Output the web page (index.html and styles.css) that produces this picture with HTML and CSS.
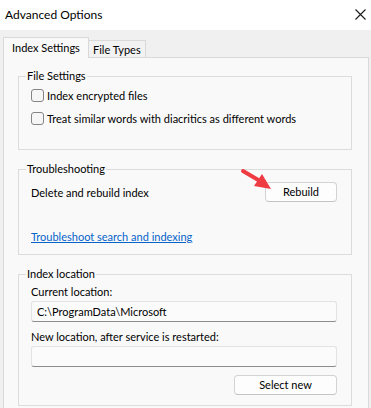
FILE: index.html
```html
<!DOCTYPE html>
<html>
<head>
<meta charset="utf-8">
<link rel="stylesheet" href="styles.css">
</head>
<body>
<div class="window">
  <div class="titlebar">
    <span class="title">Advanced Options</span>
    <svg class="close" width="11" height="11" viewBox="0 0 11 11"><path d="M0.5 0.5 L10.5 10.5 M10.5 0.5 L0.5 10.5" stroke="#1a1a1a" stroke-width="1.1" fill="none"/></svg>
  </div>
  <div class="client">
    <div class="tabs">
      <div class="tab active">Index Settings</div>
      <div class="tab">File Types</div>
    </div>
    <div class="panel">
      <fieldset class="group group-file">
        <legend>File Settings</legend>
        <div class="group-body">
          <label class="check"><span class="box"></span>Index encrypted files</label>
          <label class="check"><span class="box"></span>Treat similar words with diacritics as different words</label>
        </div>
      </fieldset>
      <fieldset class="group group-trouble">
        <legend>Troubleshooting</legend>
        <div class="group-body">
          <div class="row">
            <span>Delete and rebuild index</span>
            <button class="btn">Rebuild</button>
          </div>
          <a class="link" href="#">Troubleshoot search and indexing</a>
        </div>
      </fieldset>
      <fieldset class="group group-loc">
        <legend>Index location</legend>
        <div class="group-body">
          <div class="label">Current location:</div>
          <div class="field">C:\ProgramData\Microsoft</div>
          <div class="label label2">New location, after service is restarted:</div>
          <div class="field"></div>
          <div class="btn-row"><button class="btn btn-wide">Select new</button></div>
        </div>
      </fieldset>
    </div>
  </div>
  <svg class="arrow" width="40" height="30" viewBox="0 0 40 30">
    <line x1="3" y1="3" x2="20" y2="13" stroke="#ef3b42" stroke-width="4" stroke-linecap="round"/>
    <polygon points="31,21 14,18 22,6" fill="#ef3b42"/>
  </svg>
</div>
</body>
</html>
```

FILE: styles.css
```css
* { box-sizing: border-box; }
html, body { margin: 0; padding: 0; }
body {
  width: 371px;
  height: 408px;
  overflow: hidden;
  background: #f0f0f0;
  font-family: "Lato", "Liberation Sans", sans-serif;
  font-size: 11px;
  color: #000;
}
.window { position: relative; width: 371px; height: 408px; overflow: hidden; }
.titlebar {
  height: 30px;
  background: #fff;
  display: flex;
  align-items: center;
  justify-content: space-between;
  padding: 0 5px 0 5px;
}
.title { font-size: 12px; line-height: 16px; }
.close { margin-top: -1px; }
.client { padding: 7px 2px 0 3px; }
.tabs { display: flex; align-items: flex-end; height: 20px; }
.tab {
  border: 1px solid #d9d9d9;
  border-bottom: none;
  line-height: 16px;
  white-space: nowrap;
}
.tab.active {
  position: relative;
  z-index: 1;
  height: 21px;
  margin-bottom: -1px;
  width: 86px;
  padding: 2px 0 0 8px;
  background: #f9f9f9;
}
.tab:not(.active) {
  height: 17px;
  width: 57px;
  padding: 1px 0 0 4px;
  background: #f2f2f2;
  border-left: none;
}
.panel {
  border: 1px solid #d9d9d9;
  border-bottom: none;
  background: #f9f9f9;
  height: 351px;
  padding: 10px 16px 0 14px;
}
.group {
  margin: 0;
  border: 1px solid #dcdcdc;
  padding: 0 14px 0 7px;
  min-width: 0;
}
.group legend {
  padding: 0 1px;
  line-height: 16px;
}
.group-body { padding-left: 5px; }
.group-file { height: 82px; }
.group-file .group-body { padding-top: 3px; }
.check { display: flex; align-items: center; height: 16px; white-space: nowrap; }
.check + .check { margin-top: 7px; }
.box {
  display: inline-block;
  width: 13px;
  height: 13px;
  border: 1px solid #858585;
  border-radius: 3px;
  background: #f6f6f6;
  margin-right: 3px;
  flex: none;
}
.group-trouble { margin-top: 11px; height: 94px; }
.row {
  display: flex;
  align-items: center;
  justify-content: space-between;
  margin-top: 5px;
  height: 20px;
}
.btn {
  font: inherit;
  color: #000;
  background: #fdfdfd;
  border: 1px solid #d3d3d3;
  border-bottom-color: #c4c4c4;
  border-radius: 4px;
  height: 20px;
  width: 72px;
  padding: 0;
  line-height: 16px;
}
.link {
  display: block;
  margin-top: 27px;
  line-height: 16px;
  color: #0563c9;
  text-decoration: underline;
}
.group-loc { margin-top: 11px; height: 140px; }
.label { line-height: 16px; margin-top: 2px; }
.label2 { margin-top: 7px; }
.field {
  height: 21px;
  margin-top: 1px;
  background: #fbfbfb;
  border: 1px solid #e3e3e3;
  border-bottom-color: #8c8c8c;
  border-radius: 3px;
  padding: 1px 0 0 5px;
  line-height: 17px;
}
.btn-row { display: flex; justify-content: flex-end; margin-top: 8px; }
.btn-wide { width: 103px; }
.arrow { position: absolute; left: 240px; top: 168px; }
```
